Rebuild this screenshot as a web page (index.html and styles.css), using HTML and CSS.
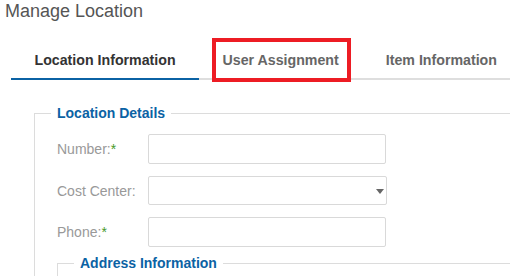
FILE: index.html
```html
<!DOCTYPE html>
<html lang="en">
<head>
    <meta charset="UTF-8">
    <meta name="viewport" content="width=device-width, initial-scale=1.0">
    <title>Manage Location</title>
    <link rel="stylesheet" href="styles.css">
</head>
<body>

<div class="page">
    <h1 class="page-title">Manage Location</h1>

    <ul class="tabs">
        <li class="tab active">Location Information</li>
        <li class="tab marked">User Assignment</li>
        <li class="tab">Item Information</li>
    </ul>

    <fieldset class="group">
        <legend>Location Details</legend>

        <div class="row">
            <label>Number:<span class="req">*</span></label>
            <input type="text" class="field">
        </div>

        <div class="row">
            <label>Cost Center:</label>
            <div class="select-wrap">
                <select class="field"></select>
            </div>
        </div>

        <div class="row">
            <label>Phone:<span class="req">*</span></label>
            <input type="text" class="field">
        </div>

        <fieldset class="group nested">
            <legend>Address Information</legend>
        </fieldset>
    </fieldset>
</div>

</body>
</html>
```

FILE: styles.css
```css
html, body {
    margin: 0;
    padding: 0;
    background-color: #fff;
    overflow: hidden;
}

body {
    font-family: "Liberation Sans", Arial, sans-serif;
    width: 510px;
    height: 276px;
}

.page {
    height: 276px;
    overflow: hidden;
}

.page-title {
    margin: 0 0 0 5px;
    padding-top: 1px;
    font-size: 18px;
    line-height: 20px;
    font-weight: normal;
    color: #555;
}

.tabs {
    display: flex;
    list-style: none;
    margin: 19px 0 0 11px;
    padding: 0;
    border-bottom: 2px solid #dedede;
}

.tab {
    position: relative;
    flex-shrink: 0;
    white-space: nowrap;
    padding: 12px 23.5px 10px;
    line-height: 16px;
    font-size: 14.2px;
    font-weight: bold;
    color: #666;
    border-bottom: 2px solid transparent;
    margin-bottom: -2px;
}

.tab:last-child {
    padding-right: 0;
}

.tab.active {
    color: #333;
    border-bottom-color: #0b62a4;
}

.tab.marked::after {
    content: "";
    position: absolute;
    left: 13px;
    top: -2px;
    width: 139px;
    height: 44px;
    box-sizing: border-box;
    border: 4px solid #ed1c24;
}

.group {
    margin: 25px 0 0 34px;
    padding: 0 0 0 22px;
    border: 1px solid #dcdcdc;
    border-right: none;
    border-bottom: none;
}

.group legend {
    margin-left: -6px;
    padding: 0 6px;
    font-size: 14px;
    line-height: 16px;
    font-weight: bold;
    color: #0b62a4;
}

.group.nested {
    margin: 8px 0 0 0;
    height: 40px;
}

.row {
    display: flex;
    align-items: center;
    margin-top: 13px;
}

.row + .row {
    margin-top: 12px;
}

.row label {
    width: 91px;
    font-size: 14px;
    color: #999;
}

.req {
    color: #4a9a2a;
}

.field {
    box-sizing: border-box;
    width: 238px;
    height: 30px;
    margin: 0;
    border: 1px solid #d9d9d9;
    border-radius: 2px;
    background-color: #fff;
    font-family: inherit;
    font-size: 14px;
}

.select-wrap {
    position: relative;
}

.select-wrap select {
    width: 239px;
    height: 29px;
    appearance: none;
    -webkit-appearance: none;
}

.select-wrap::after {
    content: "";
    position: absolute;
    right: 3px;
    top: 13px;
    border-left: 4.5px solid transparent;
    border-right: 4.5px solid transparent;
    border-top: 5px solid #666;
}
```
